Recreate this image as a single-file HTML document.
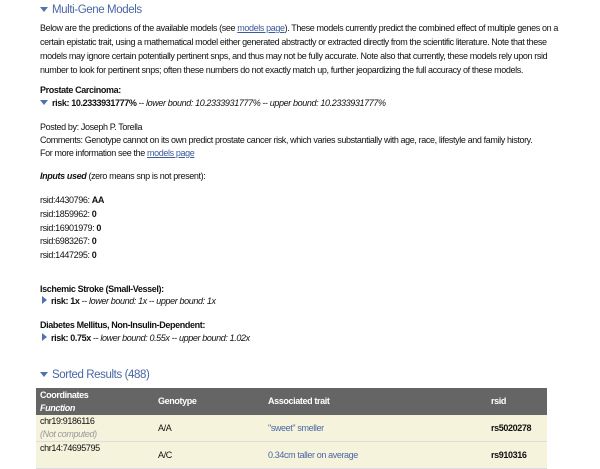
<!DOCTYPE html>
<html><head><style>
body{margin:0;width:600px;height:459px;overflow:hidden;background:#fff;font-family:"Liberation Sans",sans-serif;font-size:9px;color:#111;position:relative;letter-spacing:-0.38px}
.l{position:absolute;left:40px;white-space:nowrap;line-height:12px}
a{color:#3d5a9c;text-decoration:underline}
.h{color:#4a65a6;font-size:11.5px;line-height:14px;letter-spacing:-0.4px}
.tri{display:inline-block;width:0;height:0;border-left:4px solid transparent;border-right:4px solid transparent;border-top:5px solid #5271b0;margin-right:4px;vertical-align:1px}
.tr{display:inline-block;width:0;height:0;border-top:4px solid transparent;border-bottom:4px solid transparent;border-left:5px solid #5271b0;margin-right:4px;margin-left:2px;vertical-align:0}
table{position:absolute;left:36px;top:388px;width:511px;border-collapse:collapse;font-size:9px}
th{background:#656565;color:#fff;text-align:left;font-weight:bold;height:27px;padding:0 4px;line-height:13px}
td{background:#f5f3dc;height:26px;padding:0 4px;border-bottom:1px solid #ddd;line-height:13px}
.g{color:#999;font-style:italic}
.tl{color:#4a65a6}
</style></head><body>
<div class="l h" style="top:3px"><span class="tri"></span>Multi-Gene Models</div>
<div class="l" style="top:22px">Below are the predictions of the available models (see <a>models page</a>). These models currently predict the combined effect of multiple genes on a</div>
<div class="l" style="top:36px">certain epistatic trait, using a mathematical model either generated abstractly or extracted directly from the scientific literature. Note that these</div>
<div class="l" style="top:50px">models may ignore certain potentially pertinent snps, and thus may not be fully accurate. Note also that currently, these models rely upon rsid</div>
<div class="l" style="top:64px">number to look for pertinent snps; often these numbers do not exactly match up, further jeopardizing the full accuracy of these models.</div>
<div class="l" style="top:84px"><b>Prostate Carcinoma:</b></div>
<div class="l" style="top:97px"><span class="tri"></span><b>risk: 10.2333931777%</b> -- <i>lower bound: 10.2333931777%</i> -- <i>upper bound: 10.2333931777%</i></div>
<div class="l" style="top:121px">Posted by: Joseph P. Torella</div>
<div class="l" style="top:134px">Comments: Genotype cannot on its own predict prostate cancer risk, which varies substantially with age, race, lifestyle and family history.</div>
<div class="l" style="top:147px">For more information see the <a>models page</a></div>
<div class="l" style="top:170px"><b><i>Inputs used</i></b> (zero means snp is not present):</div>
<div class="l" style="top:194px">rsid:4430796: <b>AA</b></div>
<div class="l" style="top:208px">rsid:1859962: <b>0</b></div>
<div class="l" style="top:222px">rsid:16901979: <b>0</b></div>
<div class="l" style="top:235px">rsid:6983267: <b>0</b></div>
<div class="l" style="top:249px">rsid:1447295: <b>0</b></div>
<div class="l" style="top:283px"><b>Ischemic Stroke (Small-Vessel):</b></div>
<div class="l" style="top:295px"><span class="tr"></span><b>risk: 1x</b> -- <i>lower bound: 1x</i> -- <i>upper bound: 1x</i></div>
<div class="l" style="top:319px"><b>Diabetes Mellitus, Non-Insulin-Dependent:</b></div>
<div class="l" style="top:332px"><span class="tr"></span><b>risk: 0.75x</b> -- <i>lower bound: 0.55x</i> -- <i>upper bound: 1.02x</i></div>
<div class="l h" style="top:368px"><span class="tri"></span>Sorted Results (488)</div>
<table>
<tr><th style="width:110px">Coordinates<br><i>Function</i></th><th style="width:102px">Genotype</th><th style="width:215px">Associated trait</th><th>rsid</th></tr>
<tr><td>chr19:9186116<br><span class="g">(Not computed)</span></td><td>A/A</td><td class="tl">"sweet" smeller</td><td><b>rs5020278</b></td></tr>
<tr><td>chr14:74695795<br>&nbsp;</td><td>A/C</td><td class="tl">0.34cm taller on average</td><td><b>rs910316</b></td></tr>
</table>
</body></html>
